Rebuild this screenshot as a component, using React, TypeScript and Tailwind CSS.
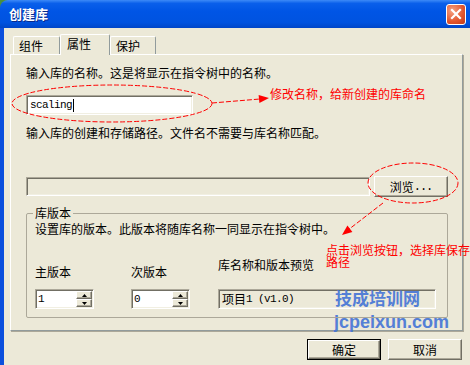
const sunken =
  "border border-t-[#aca899] border-l-[#aca899] border-r-white border-b-white shadow-[inset_1px_1px_0_#716f64,inset_-1px_-1px_0_#f1efe2]";
const raised =
  "border border-t-white border-l-white border-r-[#716f64] border-b-[#716f64] shadow-[inset_-1px_-1px_0_#aca899] bg-[#ece9d8]";
const mono = "font-['Liberation_Mono',monospace] text-[11px] tracking-[-0.6px]";

function Tab({ label, active, w }: { label: string; active?: boolean; w: string }) {
  return (
    <div
      className={
        active
          ? `relative z-10 -mb-px h-[21px] ${w} rounded-t-[2px] border border-b-0 border-t-white border-l-white border-r-[#919b9c] bg-[#ece9d8] pl-[6px] pt-[2px]`
          : `h-[18px] ${w} rounded-t-[2px] border border-b-0 border-t-white border-l-white border-r-[#919b9c] bg-[#ece9d8] pl-[5px] pt-[2px]`
      }
    >
      {label}
    </div>
  );
}

function Arrow({ up }: { up?: boolean }) {
  return (
    <svg width="5" height="3" viewBox="0 0 5 3">
      <polygon points={up ? "2.5,0 5,3 0,3" : "0,0 5,0 2.5,3"} fill="#000" />
    </svg>
  );
}

function Spinner({ value }: { value: string }) {
  return (
    <div className={`flex h-[20px] w-[59px] bg-white p-px ${sunken}`}>
      <span className={`flex-1 pl-[1px] leading-[16px] ${mono}`}>{value}</span>
      <div className="flex w-[16px] flex-col">
        <div className={`flex h-[8px] items-center justify-center ${raised}`}>
          <Arrow up />
        </div>
        <div className={`flex h-[8px] items-center justify-center ${raised}`}>
          <Arrow />
        </div>
      </div>
    </div>
  );
}

function Annotations() {
  return (
    <svg className="pointer-events-none absolute left-0 top-0" width="470" height="365">
      <g fill="none" stroke="#ff0000" strokeWidth="1" strokeDasharray="5 2">
        <ellipse cx="112" cy="103.5" rx="100" ry="18.5" />
        <ellipse cx="413" cy="183" rx="45" ry="20" />
        <line x1="212" y1="103" x2="260" y2="99" />
        <line x1="383" y1="203" x2="348" y2="230" />
      </g>
      <polygon points="269,98 259.4,102.9 258.6,94.9" fill="#ff0000" />
      <polygon points="342,235 352.4,232 347.4,225.6" fill="#ff0000" />
    </svg>
  );
}

export default function App() {
  return (
    <div className="relative h-[365px] w-[470px] overflow-hidden bg-[#4a8f3c] font-['Noto_Sans_CJK_SC',sans-serif] text-[12px] leading-[14px] text-black">
      {/* title bar */}
      <div className="flex h-[28px] items-center justify-between rounded-tl-[8px] bg-[linear-gradient(to_bottom,#3d8af7_0%,#0a5fea_12%,#0055e5_40%,#0053e0_80%,#0046c8_100%)] pl-[9px] pr-[4px]">
        <span className="text-[13px] font-bold leading-[16px] text-white [text-shadow:1px_1px_0_#0a2a8a]">
          创建库
        </span>
        <div className="flex h-[21px] w-[20px] items-center justify-center rounded-[3px] border border-white bg-[radial-gradient(circle_at_30%_30%,#f5a283,#e2552d_60%,#c23a1a)]">
          <svg width="12" height="12" viewBox="0 0 12 12">
            <path d="M2 2L10 10M10 2L2 10" stroke="#fff" strokeWidth="2.2" strokeLinecap="square" />
          </svg>
        </div>
      </div>

      <div className="flex h-[337px]">
        <div className="w-[4px] bg-[#0c4fdd]" />
        <div className="flex-1 bg-[#ece9d8] pl-[6px]">
          {/* tabs */}
          <div className="flex h-[26px] items-end pl-[3px]">
            <Tab label="组件" w="w-[47px]" />
            <Tab label="属性" w="w-[50px]" active />
            <Tab label="保护" w="w-[46px]" />
          </div>

          {/* panel */}
          <div className="h-[277px] w-[453px] border border-t-white border-l-white border-r-[#919b9c] border-b-[#919b9c] bg-[#ece9d8] pl-[15px] pt-[11px] shadow-[1px_1px_0_#aca899]">
            <div>输入库的名称。这是将显示在指令树中的名称。</div>

            <div className={`mt-[15px] flex h-[20px] w-[167px] items-center bg-white pl-[3px] ${sunken}`}>
              <span className={mono}>scaling</span>
              <span className="ml-[1px] h-[13px] w-px bg-black" />
            </div>

            <div className="mt-[11px]">输入库的创建和存储路径。文件名不需要与库名称匹配。</div>

            <div className="mt-[36px] flex h-[21px] items-center gap-[4px]">
              <div className={`h-[19px] w-[344px] bg-[#ece9d8] ${sunken}`} />
              <div className={`flex h-[21px] w-[74px] items-center justify-center ${raised}`}>
                浏览<span className="font-['Liberation_Mono',monospace] tracking-[-1px]">...</span>
              </div>
            </div>

            <fieldset className="mt-[9px] w-[422px] rounded-[2px] border border-[#aca899] px-[8px] pb-[8px]">
              <legend className="-ml-[2px] px-[2px]">库版本</legend>
              <div className="mt-[2px]">设置库的版本。此版本将随库名称一同显示在指令树中。</div>
              <div className="mt-[22px] flex items-end">
                <div className="flex w-[96px] flex-col">
                  <div className="mb-[10px]">主版本</div>
                  <Spinner value="1" />
                </div>
                <div className="flex w-[87px] flex-col">
                  <div className="mb-[10px]">次版本</div>
                  <Spinner value="0" />
                </div>
                <div className="flex w-[218px] flex-col">
                  <div className="mb-[17px]">库名称和版本预览</div>
                  <div className={`flex h-[20px] items-center bg-[#ece9d8] pl-[3px] ${sunken}`}>
                    项目<span className={mono}>1 (v1.0)</span>
                  </div>
                </div>
              </div>
            </fieldset>
          </div>

          {/* dialog buttons */}
          <div className="mt-[8px] flex w-[453px] justify-end gap-[7px] pr-[1px]">
            <div className="h-[21px] w-[74px] border border-black">
              <div className={`flex h-full w-full items-center justify-center ${raised}`}>确定</div>
            </div>
            <div className={`flex h-[21px] w-[74px] items-center justify-center ${raised}`}>取消</div>
          </div>
        </div>
      </div>

      <Annotations />

      <div className="pointer-events-none absolute left-[270px] top-[87px] text-[#ff0000]">
        修改名称，给新创建的库命名
      </div>
      <div className="pointer-events-none absolute left-[326px] top-[244px] w-[144px] leading-[12px] text-[#ff0000]">
        点击浏览按钮，选择库保存路径
      </div>

      {/* watermark */}
      <div className="pointer-events-none absolute left-[334px] top-[288px] flex flex-col text-[#4474d6] opacity-90">
        <span className="ml-[1px] text-[17px] font-bold leading-[20px]">技成培训网</span>
        <span className="mt-[3px] font-['Liberation_Sans',sans-serif] text-[18px] font-bold leading-[22px]">
          jcpeixun.com
        </span>
      </div>
    </div>
  );
}
